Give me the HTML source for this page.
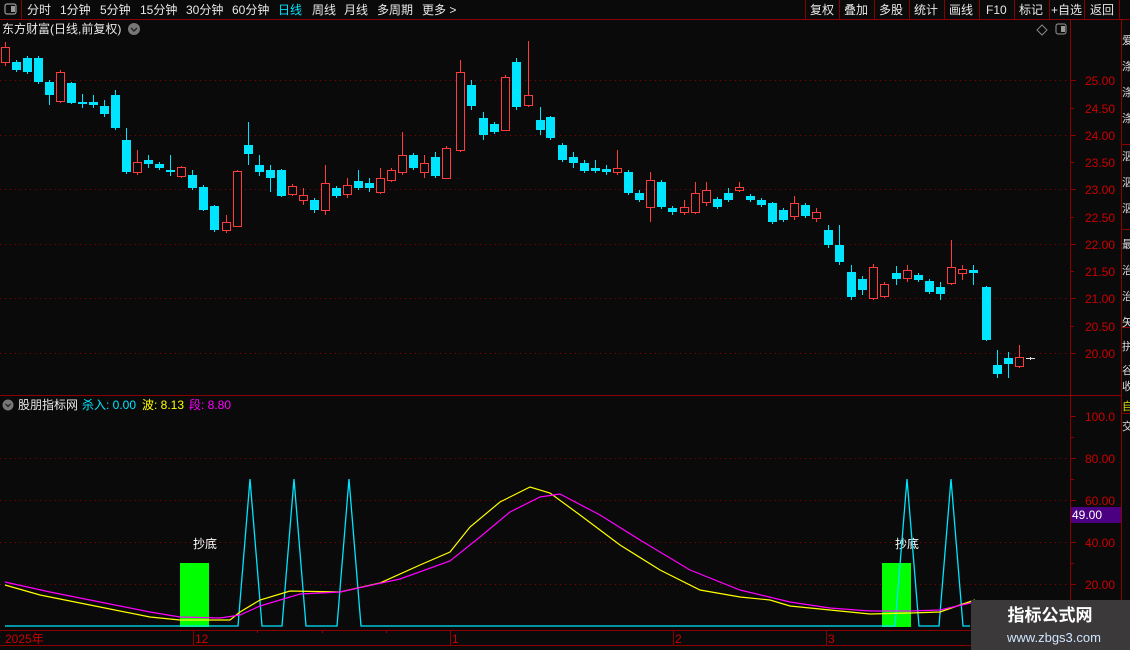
<!DOCTYPE html>
<html><head><meta charset="utf-8"><style>
html,body{margin:0;padding:0;background:#0a0a0a;width:1130px;height:650px;overflow:hidden;font-family:"Liberation Sans","Noto Sans CJK SC",sans-serif}
svg text{font-family:"Liberation Sans","Noto Sans CJK SC",sans-serif}
</style></head><body>
<svg width="1130" height="650" viewBox="0 0 1130 650" xmlns="http://www.w3.org/2000/svg">
<rect width="1130" height="650" fill="#0a0a0a"/>
<!-- top bar -->
<g stroke="#8b0000" stroke-width="1" fill="none">
<line x1="0" y1="19.5" x2="1130" y2="19.5"/>
<line x1="21.5" y1="0" x2="21.5" y2="19"/>
<line x1="805.5" y1="0" x2="805.5" y2="19"/>
<line x1="839.5" y1="0" x2="839.5" y2="19"/>
<line x1="874.5" y1="0" x2="874.5" y2="19"/>
<line x1="909.5" y1="0" x2="909.5" y2="19"/>
<line x1="944.5" y1="0" x2="944.5" y2="19"/>
<line x1="979.5" y1="0" x2="979.5" y2="19"/>
<line x1="1014.5" y1="0" x2="1014.5" y2="19"/>
<line x1="1049.5" y1="0" x2="1049.5" y2="19"/>
<line x1="1084.5" y1="0" x2="1084.5" y2="19"/>
<line x1="1119.5" y1="0" x2="1119.5" y2="19"/>
</g>
<rect x="5" y="4" width="11" height="10" rx="2" fill="none" stroke="#999" stroke-width="1.2"/>
<rect x="11" y="6" width="4" height="6" fill="#999"/>
<g font-size="12" fill="#e8e8e8">
<text x="27" y="14">分时</text><text x="60" y="14">1分钟</text><text x="100" y="14">5分钟</text>
<text x="140" y="14">15分钟</text><text x="186" y="14">30分钟</text><text x="232" y="14">60分钟</text>
<text x="278" y="14" fill="#00e5ff">日线</text><text x="312" y="14">周线</text><text x="344" y="14">月线</text>
<text x="377" y="14">多周期</text><text x="422" y="14">更多 &gt;</text>
<text x="810" y="14">复权</text><text x="844" y="14">叠加</text><text x="879" y="14">多股</text><text x="914" y="14">统计</text>
<text x="949" y="14">画线</text><text x="986" y="14">F10</text><text x="1019" y="14">标记</text><text x="1051" y="14">+自选</text><text x="1090" y="14">返回</text>
</g>
<!-- title -->
<text x="2" y="33" font-size="12" fill="#e8e8e8">东方财富(日线,前复权)</text>
<circle cx="134" cy="29" r="6" fill="#777"/><path d="M131 28l3 3 3-3" stroke="#222" stroke-width="1.4" fill="none"/>
<path d="M1042 25l5 5-5 5-5-5z" fill="none" stroke="#888"/>
<rect x="1056" y="24" width="10" height="10" rx="2" fill="none" stroke="#999"/><rect x="1061" y="26" width="4" height="6" fill="#999"/>
<!-- axes -->
<g stroke="#8b0000" fill="none">
<line x1="1070.5" y1="20" x2="1070.5" y2="645"/>
<line x1="1121.5" y1="20" x2="1121.5" y2="650"/>
<line x1="0" y1="395.5" x2="1121" y2="395.5"/>
<line x1="0" y1="630.5" x2="1130" y2="630.5"/>
<line x1="0" y1="645.5" x2="1130" y2="645.5"/>
<line x1="1121" y1="144.5" x2="1130" y2="144.5"/>
<line x1="1121" y1="229.5" x2="1130" y2="229.5"/>
<line x1="1121" y1="327.5" x2="1130" y2="327.5"/>
<line x1="1121" y1="413.5" x2="1130" y2="413.5"/>
</g>
<g stroke="#8b0000" stroke-dasharray="1 4">
<line x1="0" y1="80.5" x2="1068" y2="80.5"/><line x1="0" y1="135.5" x2="1068" y2="135.5"/>
<line x1="0" y1="189.5" x2="1068" y2="189.5"/><line x1="0" y1="244.5" x2="1068" y2="244.5"/>
<line x1="0" y1="298.5" x2="1068" y2="298.5"/><line x1="0" y1="353.5" x2="1068" y2="353.5"/>
<line x1="0" y1="458.5" x2="1068" y2="458.5"/><line x1="0" y1="500.5" x2="1068" y2="500.5"/>
<line x1="0" y1="542.5" x2="1068" y2="542.5"/><line x1="0" y1="584.5" x2="1068" y2="584.5"/>
</g>
<g stroke="#8b0000">
<line x1="1071" y1="80.5" x2="1076" y2="80.5"/><line x1="1071" y1="108.5" x2="1074" y2="108.5"/>
<line x1="1071" y1="135.5" x2="1076" y2="135.5"/><line x1="1071" y1="162.5" x2="1074" y2="162.5"/>
<line x1="1071" y1="189.5" x2="1076" y2="189.5"/><line x1="1071" y1="217.5" x2="1074" y2="217.5"/>
<line x1="1071" y1="244.5" x2="1076" y2="244.5"/><line x1="1071" y1="271.5" x2="1074" y2="271.5"/>
<line x1="1071" y1="298.5" x2="1076" y2="298.5"/><line x1="1071" y1="326.5" x2="1074" y2="326.5"/>
<line x1="1071" y1="353.5" x2="1076" y2="353.5"/>
<line x1="1071" y1="416.5" x2="1076" y2="416.5"/><line x1="1071" y1="437.5" x2="1074" y2="437.5"/>
<line x1="1071" y1="458.5" x2="1076" y2="458.5"/><line x1="1071" y1="479.5" x2="1074" y2="479.5"/>
<line x1="1071" y1="500.5" x2="1076" y2="500.5"/><line x1="1071" y1="521.5" x2="1074" y2="521.5"/>
<line x1="1071" y1="542.5" x2="1076" y2="542.5"/><line x1="1071" y1="563.5" x2="1074" y2="563.5"/>
<line x1="1071" y1="584.5" x2="1076" y2="584.5"/>
</g>
<g font-size="12" fill="#cc0000">
<text x="1085" y="85">25.00</text><text x="1085" y="113">24.50</text><text x="1085" y="140">24.00</text>
<text x="1085" y="167">23.50</text><text x="1085" y="194">23.00</text><text x="1085" y="222">22.50</text>
<text x="1085" y="249">22.00</text><text x="1085" y="276">21.50</text><text x="1085" y="303">21.00</text>
<text x="1085" y="331">20.50</text><text x="1085" y="358">20.00</text>
<text x="1085" y="421">100.0</text><text x="1085" y="463">80.00</text><text x="1085" y="505">60.00</text>
<text x="1085" y="547">40.00</text><text x="1085" y="589">20.00</text>
</g>
<rect x="1071" y="507" width="50" height="16" fill="#4b0082"/>
<text x="1072" y="519" font-size="12" fill="#fff">49.00</text>
<g font-size="11" fill="#ddd">
<text x="1122" y="44">爱</text><text x="1122" y="70">涤</text><text x="1122" y="96">涤</text><text x="1122" y="122">涤</text>
<text x="1122" y="160">泅</text><text x="1122" y="186">泅</text><text x="1122" y="212">泅</text>
<text x="1122" y="248">最</text><text x="1122" y="274">治</text><text x="1122" y="300">治</text><text x="1122" y="326">矢</text>
<text x="1122" y="350">拼</text><text x="1122" y="374">谷</text><text x="1122" y="390">收</text>
<text x="1122" y="410" fill="#dd0">自</text><text x="1122" y="430">交</text>
</g>
<!-- candles -->
<g id="c"></g>
<!-- indicator header -->
<circle cx="8" cy="405" r="5.5" fill="#777"/><path d="M5.5 404l2.5 2.5 2.5-2.5" stroke="#222" stroke-width="1.3" fill="none"/>
<text x="18" y="409" font-size="12" fill="#e8e8e8">股朋指标网</text>
<text x="82" y="409" font-size="12" fill="#00e5ff">杀入: 0.00</text>
<text x="142" y="409" font-size="12" fill="#ffff00">波: 8.13</text>
<text x="189" y="409" font-size="12" fill="#ff00ff">段: 8.80</text>
<!-- indicator -->
<rect x="180" y="563" width="29" height="64" fill="#00ff00"/>
<rect x="882" y="563" width="29" height="64" fill="#00ff00"/>
<text x="193" y="548" font-size="12" fill="#fff">抄底</text>
<text x="895" y="548" font-size="12" fill="#fff">抄底</text>
<polyline fill="none" stroke="#00e5ff" stroke-width="1.3" points="5,626 180,626 209,626 238,626 250,479 262,626 282,626 294,479 306,626 337,626 349,479 361,626 895,626 907,479 919,626 939,626 951,479 963,626 970,626"/>
<polyline fill="none" stroke="#ffff00" stroke-width="1.2" points="5,585 40,595 100,607 150,617 180,620 230,620 240,612 260,600 290,591 340,592 380,583 420,565 450,552 470,527 500,502 530,487 550,493 580,515 620,545 660,570 700,590 740,597 770,600 790,606 830,610 870,614 910,613 940,612 960,605 975,600"/>
<polyline fill="none" stroke="#ff00ff" stroke-width="1.2" points="5,582 50,592 100,602 150,612 180,617 220,618 240,615 260,606 300,594 340,592 400,579 450,561 480,537 510,512 540,497 560,494 600,515 640,540 690,570 740,590 790,602 830,608 870,611 910,611 940,610 975,602"/>
<!-- date axis -->
<g stroke="#8b0000"><line x1="193.5" y1="631" x2="193.5" y2="645"/><line x1="450.5" y1="631" x2="450.5" y2="645"/><line x1="673.5" y1="631" x2="673.5" y2="645"/><line x1="826.5" y1="631" x2="826.5" y2="645"/>
<line x1="257.5" y1="631" x2="257.5" y2="633"/><line x1="322.5" y1="631" x2="322.5" y2="633"/><line x1="386.5" y1="631" x2="386.5" y2="633"/></g>
<g font-size="12" fill="#cc0000"><text x="5" y="643">2025年</text><text x="195" y="643">12</text><text x="452" y="643">1</text><text x="675" y="643">2</text><text x="828" y="643">3</text></g>
<!-- watermark -->
<rect x="971" y="600" width="159" height="50" fill="#3b3939"/>
<text x="1050" y="621" font-size="17" font-weight="bold" fill="#fff" text-anchor="middle">指标公式网</text>
<text x="1054" y="642" font-size="13" fill="#cfe6ff" text-anchor="middle">www.zbgs3.com</text>
</svg>
<script>
var d=[[5,"r",47,62,42,66],[16,"c",62,70,60,72],[27,"c",58,72,56,74],[38,"c",58,82,56,84],[49,"c",82,95,80,105],[60,"r",72,101,70,103],[71,"c",83,103,82,104],[82,"c",102,104,94,108],[93,"c",102,105,95,108],[104,"c",106,114,100,117],[115,"c",95,128,90,130],[126,"c",140,172,128,174],[137,"r",162,172,150,175],[148,"c",160,164,155,168],[159,"c",164,168,162,170],[170,"c",170,172,155,176],[181,"r",167,176,166,178],[192,"c",175,188,170,190],[203,"c",187,210,185,211],[214,"c",206,230,205,232],[226,"r",222,230,215,233],[237,"r",171,226,170,227],[248,"c",145,154,122,165],[259,"c",165,172,155,176],[270,"c",170,178,165,192],[281,"c",170,196,169,197],[292,"r",186,194,184,196],[303,"r",195,200,188,205],[314,"c",200,210,198,213],[325,"r",183,210,165,215],[336,"c",188,196,186,198],[347,"r",185,194,178,198],[358,"c",181,188,170,190],[369,"c",183,188,178,192],[380,"r",178,192,168,194],[391,"r",170,180,168,182],[402,"r",155,172,132,175],[413,"c",155,168,153,170],[424,"r",163,172,155,178],[435,"c",157,176,152,178],[446,"r",148,178,146,179],[460,"r",72,150,60,152],[471,"c",85,106,80,110],[483,"c",118,135,112,140],[494,"c",124,132,122,134],[505,"r",77,130,75,131],[516,"c",62,107,58,110],[528,"r",95,105,41,107],[540,"c",120,130,107,135],[550,"c",117,138,116,140],[562,"c",145,160,143,162],[573,"c",157,163,152,168],[584,"c",163,171,160,173],[595,"c",168,171,160,173],[606,"c",169,172,165,175],[617,"r",168,172,150,175],[628,"c",172,193,170,195],[639,"c",193,200,190,202],[650,"r",180,207,172,222],[661,"c",182,207,180,209],[672,"c",208,212,206,215],[684,"r",207,212,200,215],[695,"r",193,212,182,214],[706,"r",190,202,182,206],[717,"c",199,207,197,209],[728,"c",193,200,188,202],[739,"r",187,190,182,192],[750,"c",196,200,194,202],[761,"c",200,205,198,207],[772,"c",203,222,202,224],[783,"c",210,220,208,222],[794,"r",203,216,196,220],[805,"c",205,216,203,218],[816,"r",212,218,208,222],[828,"c",230,245,225,248],[839,"c",245,262,225,265],[851,"c",272,297,265,300],[862,"c",279,290,276,295],[873,"r",267,298,264,300],[884,"r",284,296,282,298],[896,"c",273,279,266,285],[907,"r",270,278,265,282],[918,"c",275,280,273,282],[929,"c",281,292,279,294],[940,"c",287,294,282,300],[951,"r",267,283,240,285],[962,"r",269,273,265,280],[973,"c",270,273,265,285],[986,"c",287,340,286,341],[997,"c",365,374,350,378],[1008,"c",358,364,352,378],[1019,"r",357,366,345,368],[1030,"w",358,359,357,360]];
var s="";d.forEach(function(a){var x=a[0],col=a[1]=="r"?"#ff3b3b":(a[1]=="c"?"#00e5ff":"#ddd"),t=a[2],b=a[3],wt=a[4],wb=a[5];
s+='<line x1="'+(x+.5)+'" y1="'+wt+'" x2="'+(x+.5)+'" y2="'+t+'" stroke="'+col+'"/>';
s+='<line x1="'+(x+.5)+'" y1="'+b+'" x2="'+(x+.5)+'" y2="'+wb+'" stroke="'+col+'"/>';
var h=Math.max(1,b-t);
if(a[1]=="r")s+='<rect x="'+(x-3.5)+'" y="'+(t+.5)+'" width="8" height="'+h+'" fill="#0a0a0a" stroke="'+col+'"/>';
else s+='<rect x="'+(x-4)+'" y="'+t+'" width="9" height="'+h+'" fill="'+col+'"/>';});
document.getElementById("c").innerHTML=s;
</script>
</body></html>
